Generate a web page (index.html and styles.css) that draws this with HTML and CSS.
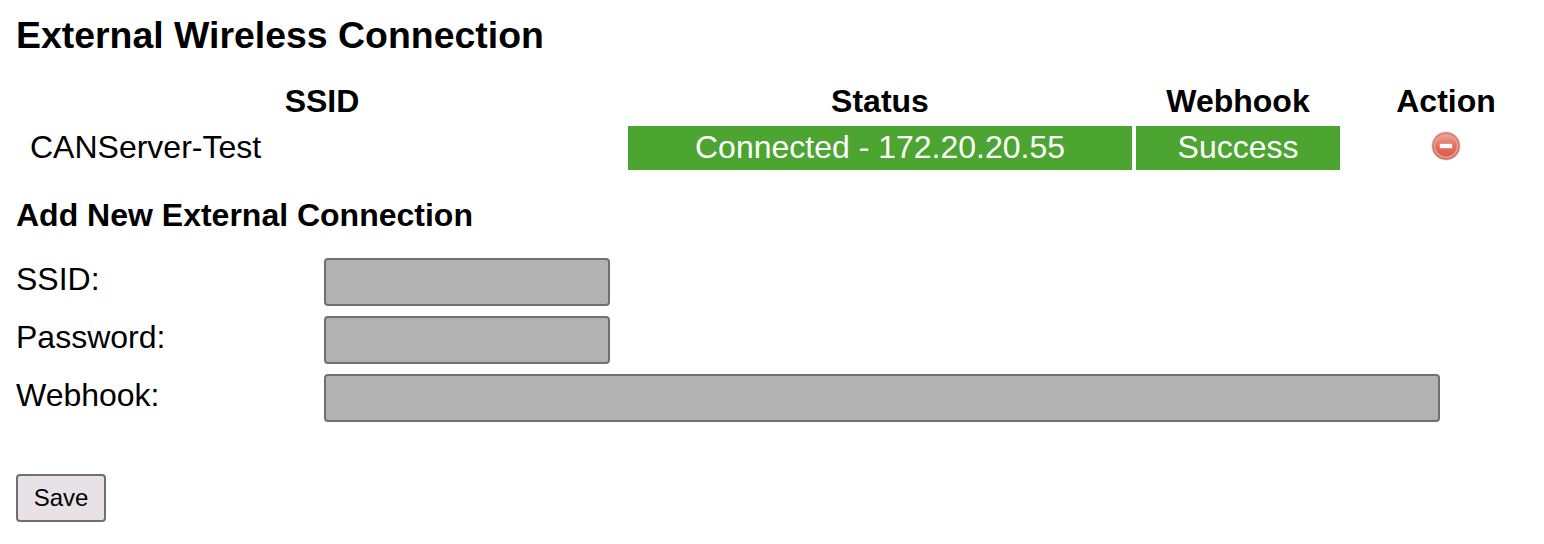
FILE: index.html
```html
<!DOCTYPE html>
<html lang="en">
<head>
<meta charset="utf-8">
<title>External Wireless Connection</title>
<link rel="stylesheet" href="styles.css">
</head>
<body>
<h1 class="title">External Wireless Connection</h1>
<div class="grid">
  <div class="head first">SSID</div><div class="head">Status</div><div class="head">Webhook</div><div class="head">Action</div>
  <div class="name">CANServer-Test</div>
  <div class="ok">Connected - 172.20.20.55</div>
  <div class="ok">Success</div>
  <div class="action">
    <svg width="32" height="32" viewBox="0 0 32 32" role="img" aria-label="Remove">
      <defs>
        <linearGradient id="red" x1="0" y1="0" x2="0" y2="1"><stop offset="0" stop-color="#e8a093"/><stop offset=".5" stop-color="#e2705f"/><stop offset="1" stop-color="#e0594e"/></linearGradient>
        <linearGradient id="rim" x1="0" y1="0" x2="0" y2="1"><stop offset="0" stop-color="#dc8075"/><stop offset="1" stop-color="#c4736c"/></linearGradient>
      </defs>
      <circle cx="16" cy="16" r="14.5" fill="#d98a80" opacity=".4"/>
      <circle cx="16" cy="16" r="13.8" fill="url(#rim)"/>
      <circle cx="16" cy="16" r="12" fill="#e9a497"/>
      <circle cx="16" cy="16" r="10.7" fill="url(#red)"/>
      <rect x="9.5" y="13.5" width="13" height="5" rx="1" fill="#eda79c"/>
      <rect x="10" y="14" width="12" height="4" fill="#fff"/>
    </svg>
  </div>
</div>
<h2 class="subtitle">Add New External Connection</h2>
<form class="form">
  <div class="row"><label class="label" for="ssid">SSID:</label><input class="field" id="ssid" type="text"></div>
  <div class="row"><label class="label" for="password">Password:</label><input class="field" id="password" type="password"></div>
  <div class="row"><label class="label" for="webhook">Webhook:</label><input class="field wide" id="webhook" type="text"></div>
  <button class="save" type="button">Save</button>
</form>
</body>
</html>
```
FILE: styles.css
```css
* { box-sizing: border-box; }
body { margin: 0; padding: 13px 16px 0; height: 544px; overflow: hidden; background: #fff; color: #000; font: 32px/42px "Liberation Sans", Arial, sans-serif; }
.title { margin: 0 0 23px; font-size: 37.44px; line-height: 44px; }
.grid { display: grid; grid-template-columns: 608px 504px 204px 204px; grid-auto-rows: 44px; gap: 2px 4px; margin-right: -16px; text-align: center; }
.head { font-weight: bold; }
.first { padding-left: 4px; }
.name { text-align: left; padding-left: 14px; }
.ok { background: #4ca531; color: #fff; }
.action { display: flex; justify-content: center; align-items: center; padding-bottom: 4px; }
.subtitle { margin: 23px 0 21px; font-size: 32px; line-height: 44px; }
.form { margin: 0; }
.row { display: flex; height: 48px; margin-bottom: 10px; }
.label { width: 308px; line-height: 42px; }
.field { width: 286px; height: 48px; margin: 0; padding: 4px; border: 2px solid #707070; border-radius: 4px; background: #b2b2b2; outline: 0; }
.wide { width: 1116px; }
.save { display: block; width: 90px; height: 48px; margin-top: 52px; padding: 0; border: 2px solid #706e70; border-radius: 4px; background: #e8e1e6; color: #000; font: 24px "Liberation Sans", Arial, sans-serif; }
```
